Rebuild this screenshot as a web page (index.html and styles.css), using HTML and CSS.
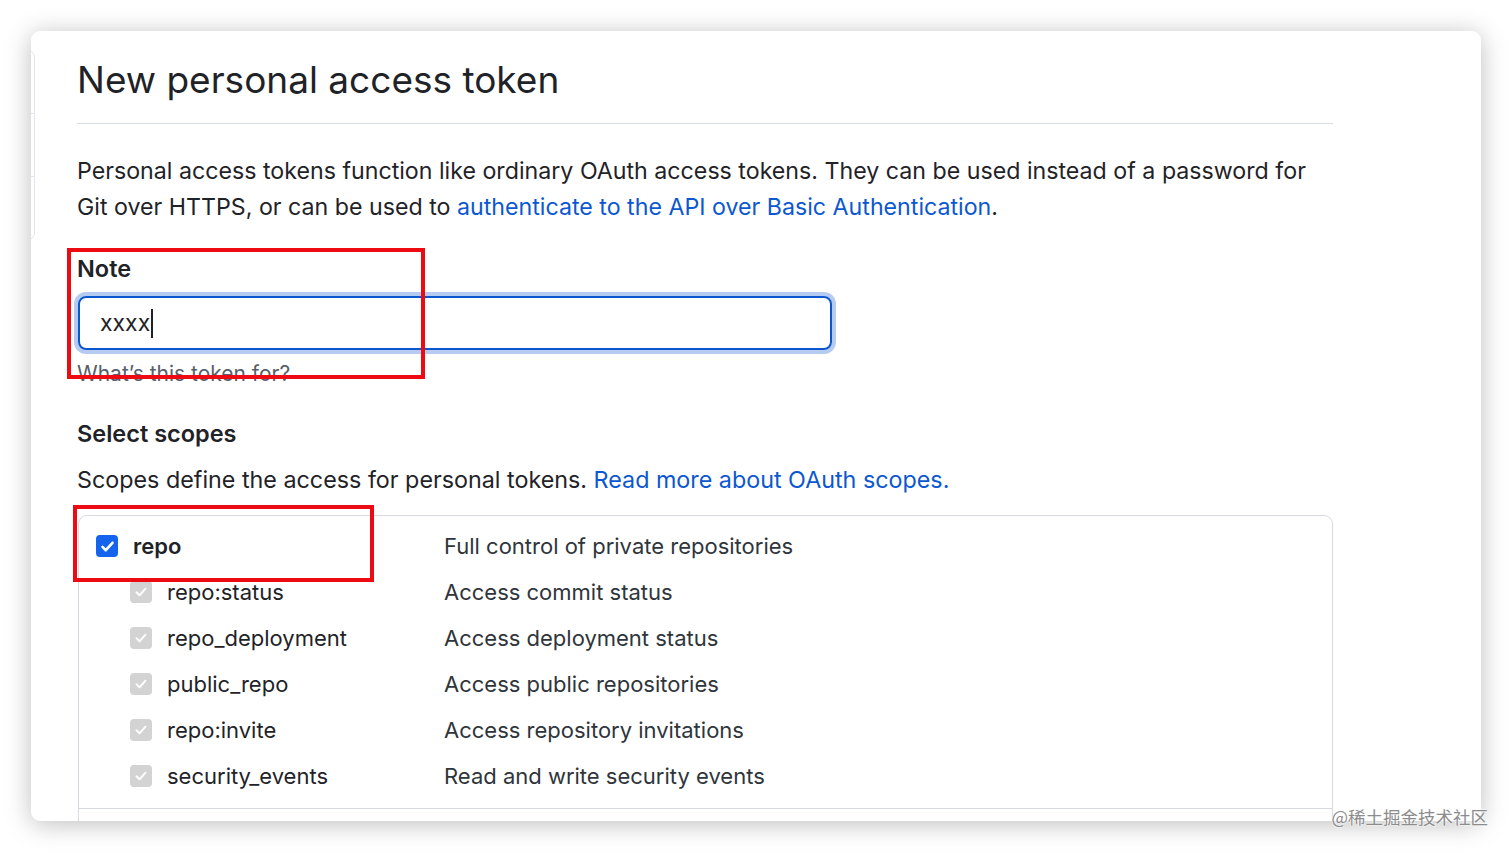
FILE: index.html
```html
<!DOCTYPE html>
<html lang="en">
<head>
<meta charset="utf-8">
<title>New personal access token</title>
<link rel="stylesheet" href="styles.css">
</head>
<body>
<div class="card">
  <div class="sidebar">
    <div class="menu">
      <div class="menu-item"></div>
      <div class="menu-item"></div>
      <div class="menu-item"></div>
    </div>
  </div>
  <main class="content">
    <h1 class="title">New personal access token</h1>
    <p class="intro">Personal access tokens function like ordinary OAuth access tokens. They can be used instead of a password for Git over HTTPS, or can be used to <a class="link" href="#">authenticate to the API over Basic Authentication</a>.</p>

    <div class="note-group">
      <label class="field-label">Note</label>
      <div class="input"><span class="input-text">xxxx</span><span class="caret"></span></div>
      <p class="hint">What’s this token for?</p>
      <div class="highlight highlight-note"></div>
    </div>

    <h2 class="section-title">Select scopes</h2>
    <p class="section-desc">Scopes define the access for personal tokens. <a class="link" href="#">Read more about OAuth scopes.</a></p>

    <div class="scopes">
      <div class="scope-group">
        <div class="row row-main">
          <span class="check check-on"><svg viewBox="0 0 16 16" width="17" height="17"><path d="M3.3 8.4l3.1 3.1 6.3-7" fill="none" stroke="#fff" stroke-width="2.5" stroke-linecap="round" stroke-linejoin="round"/></svg></span>
          <span class="scope-name bold">repo</span>
          <span class="scope-desc">Full control of private repositories</span>
        </div>
        <div class="row row-sub">
          <span class="check check-off"><svg viewBox="0 0 16 16" width="16" height="16"><path d="M3.5 8.3l3 3 6-6.6" fill="none" stroke="#fff" stroke-width="2" stroke-linecap="round" stroke-linejoin="round"/></svg></span>
          <span class="scope-name sub">repo:status</span>
          <span class="scope-desc">Access commit status</span>
        </div>
        <div class="row row-sub">
          <span class="check check-off"><svg viewBox="0 0 16 16" width="16" height="16"><path d="M3.5 8.3l3 3 6-6.6" fill="none" stroke="#fff" stroke-width="2" stroke-linecap="round" stroke-linejoin="round"/></svg></span>
          <span class="scope-name sub">repo_deployment</span>
          <span class="scope-desc">Access deployment status</span>
        </div>
        <div class="row row-sub">
          <span class="check check-off"><svg viewBox="0 0 16 16" width="16" height="16"><path d="M3.5 8.3l3 3 6-6.6" fill="none" stroke="#fff" stroke-width="2" stroke-linecap="round" stroke-linejoin="round"/></svg></span>
          <span class="scope-name sub">public_repo</span>
          <span class="scope-desc">Access public repositories</span>
        </div>
        <div class="row row-sub">
          <span class="check check-off"><svg viewBox="0 0 16 16" width="16" height="16"><path d="M3.5 8.3l3 3 6-6.6" fill="none" stroke="#fff" stroke-width="2" stroke-linecap="round" stroke-linejoin="round"/></svg></span>
          <span class="scope-name sub">repo:invite</span>
          <span class="scope-desc">Access repository invitations</span>
        </div>
        <div class="row row-sub">
          <span class="check check-off"><svg viewBox="0 0 16 16" width="16" height="16"><path d="M3.5 8.3l3 3 6-6.6" fill="none" stroke="#fff" stroke-width="2" stroke-linecap="round" stroke-linejoin="round"/></svg></span>
          <span class="scope-name sub">security_events</span>
          <span class="scope-desc">Read and write security events</span>
        </div>
        <div class="highlight highlight-repo"></div>
      </div>
      <div class="scope-group next"></div>
    </div>
  </main>
</div>
<div class="watermark">@稀土掘金技术社区</div>
</body>
</html>
```

FILE: styles.css
```css
html, body {
  margin: 0;
  padding: 0;
  background: #ffffff;
}
body {
  position: relative;
  padding: 31px;
  height: 852px;
  box-sizing: border-box;
  font-family: Inter, "Noto Sans", "Liberation Sans", sans-serif;
  color: #1f2328;
}
.card {
  position: relative;
  height: 790px;
  background: #fff;
  border-radius: 9px;
  box-shadow: 0 3px 26px rgba(0, 0, 0, 0.26);
  display: flex;
  overflow: hidden;
}
.sidebar {
  width: 5px;
  flex: none;
  overflow: hidden;
  padding-top: 19px;
}
.menu {
  width: 200px;
  margin-left: -196px;
  height: 190px;
  border: 1px solid #e3e6ea;
  border-radius: 7px;
  box-sizing: border-box;
  display: flex;
  flex-direction: column;
}
.menu-item {
  flex: 1;
  border-top: 1px solid #e3e6ea;
}
.menu-item:first-child { border-top: none; }
.content {
  margin-left: 41px;
  width: 1256px;
  padding-top: 26px;
  position: relative;
}
.title {
  margin: 0;
  font-size: 37px;
  font-weight: 400;
  line-height: 46px;
  letter-spacing: 0;
  color: #1f2328;
  padding-bottom: 20px;
  border-bottom: 1.5px solid #d8dee4;
}
.intro {
  margin: 29px 0 0;
  font-size: 23.2px;
  line-height: 36px;
  color: #1f2328;
}
.link {
  color: #0c58d0;
  text-decoration: none;
}
.note-group {
  position: relative;
  margin-top: 30px;
}
.field-label {
  display: block;
  font-size: 23.5px;
  font-weight: 600;
  line-height: 28px;
}
.input {
  margin-top: 13px;
  width: 730px;
  height: 50px;
  border: 2px solid #0b56cf;
  border-radius: 8px;
  box-shadow: 0 0 0 4px #b5cbf2;
  display: flex;
  align-items: center;
  padding-left: 20px;
  box-sizing: content-box;
  margin-left: 1px;
}
.input-text {
  font-size: 23px;
  color: #1f2328;
}
.caret {
  width: 1.5px;
  height: 29px;
  background: #1f2328;
  margin-left: 1px;
}
.hint {
  margin: 11px 0 0;
  font-size: 21px;
  line-height: 26px;
  color: #57606a;
}
.highlight {
  position: absolute;
  border: 4px solid #ee0a12;
  box-sizing: border-box;
  pointer-events: none;
}
.highlight-note {
  left: -10px;
  top: -7px;
  width: 358px;
  height: 131px;
}
.section-title {
  margin: 32px 0 0;
  font-size: 23.5px;
  font-weight: 600;
  line-height: 30px;
}
.section-desc {
  margin: 16px 0 0;
  font-size: 23.3px;
  line-height: 30px;
}
.scopes {
  margin-top: 20px;
  margin-left: 1px;
  border: 1.5px solid #d6dadf;
  border-radius: 9px;
}
.scope-group {
  position: relative;
  padding: 7px 0 9px;
}
.scope-group.next {
  border-top: 1.5px solid #d6dadf;
  height: 60px;
}
.row {
  display: flex;
  align-items: center;
  height: 46px;
  font-size: 22px;
}
.check {
  width: 22px;
  height: 22px;
  border-radius: 4px;
  display: flex;
  align-items: center;
  justify-content: center;
  flex: none;
}
.check-on { background: #1464ee; margin-left: 17px; }
.check-off { background: #d3d3d3; margin-left: 51px; }
.scope-name {
  color: #1f2328;
  margin-left: 15px;
}
.scope-name.bold { font-weight: 600; width: 311px; }
.scope-name.sub { width: 277px; }
.scope-desc {
  color: #2f353b;
}
.highlight-repo {
  left: -6px;
  top: -11px;
  width: 301px;
  height: 77px;
}
.watermark {
  position: absolute;
  right: 24px;
  top: 805px;
  font-family: "Noto Sans CJK SC", sans-serif;
  font-size: 17.5px;
  line-height: 24px;
  color: #8c8c8c;
  text-shadow: 0 0 2px #fff, 0 0 2px #fff;
}
```
